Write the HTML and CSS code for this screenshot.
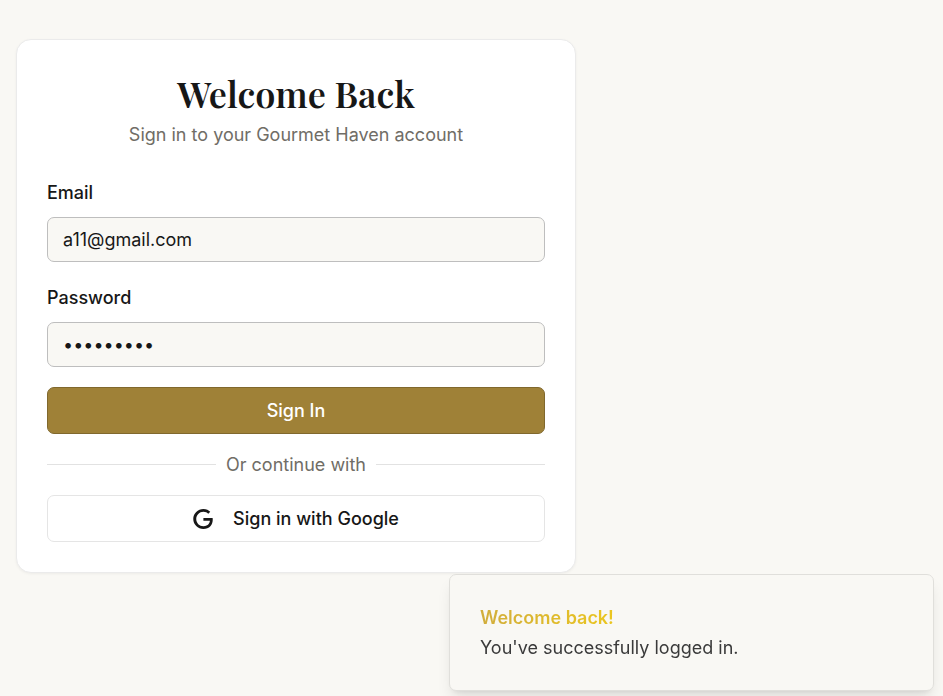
FILE: index.html
```html
<!DOCTYPE html>
<html lang="en">
<head>
<meta charset="utf-8">
<meta name="viewport" content="width=device-width, initial-scale=1">
<title>Sign in - Gourmet Haven</title>
<link rel="stylesheet" href="styles.css">
</head>
<body>
<main class="page">
  <section class="card">
    <header class="card-header">
      <h1 class="title">Welcome Back</h1>
      <p class="subtitle">Sign in to your Gourmet Haven account</p>
    </header>
    <form class="form">
      <div class="field">
        <label class="label" for="email">Email</label>
        <input class="input" id="email" type="email" value="a11@gmail.com">
      </div>
      <div class="field">
        <label class="label" for="password">Password</label>
        <input class="input" id="password" type="password" value="gourmet11">
      </div>
      <button class="button button-primary" type="submit">Sign In</button>
    </form>
    <div class="divider">Or continue with</div>
    <button class="button button-outline" type="button">
      <svg class="google" viewBox="0 0 24 24" aria-hidden="true"><path d="M12.48 10.92v3.28h7.84c-.24 1.84-.853 3.187-1.787 4.133-1.147 1.147-2.933 2.4-6.053 2.4-4.827 0-8.6-3.893-8.6-8.72s3.773-8.72 8.6-8.72c2.6 0 4.507 1.027 5.907 2.347l2.307-2.307C18.747 1.44 16.133 0 12.48 0 5.867 0 .307 5.387.307 12s5.56 12 12.173 12c3.573 0 6.267-1.173 8.373-3.36 2.16-2.16 2.84-5.213 2.84-7.667 0-.76-.053-1.467-.173-2.053H12.48z"/></svg>
      <span>Sign in with Google</span>
    </button>
  </section>
</main>
<div class="toast" role="status">
  <strong class="toast-title">Welcome back!</strong>
  <p class="toast-text">You've successfully logged in.</p>
</div>
</body>
</html>
```
FILE: styles.css
```css
* {
  box-sizing: border-box;
}

body {
  margin: 0;
  min-height: 100vh;
  overflow: hidden;
  background: #f9f8f4;
  color: #171717;
  font-family: Inter, "Liberation Sans", sans-serif;
  font-size: 18px;
  line-height: 25px;
}

h1,
p {
  margin: 0;
}

.page {
  padding: 39px 16px;
}

.card {
  max-width: 560px;
  padding: 30px;
  border: 1px solid #ebebeb;
  border-radius: 15px;
  background: #fff;
  box-shadow: 0 1px 3px rgb(0 0 0 / 5%);
}

.card-header {
  margin-bottom: 30px;
  text-align: center;
}

.title {
  margin-bottom: 6px;
  font-family: "Playfair Display", "Liberation Serif", serif;
  font-size: 36px;
  font-weight: 600;
  line-height: 46px;
}

.subtitle {
  color: #706d66;
}

.form {
  display: flex;
  flex-direction: column;
  gap: 20px;
}

.field {
  display: flex;
  flex-direction: column;
  gap: 8px;
}

.label {
  font-weight: 500;
  line-height: 32px;
}

.input {
  width: 100%;
  height: 45px;
  padding: 0 15px;
  border: 1px solid #bebebe;
  border-radius: 7px;
  outline: 0;
  background: #f9f8f4;
  color: inherit;
  font: inherit;
}

.button {
  display: flex;
  align-items: center;
  justify-content: center;
  gap: 20px;
  width: 100%;
  height: 47px;
  border: 1px solid #e5e5e5;
  border-radius: 7px;
  background: #fff;
  color: inherit;
  font: inherit;
  font-weight: 500;
}

.button-primary {
  border-color: #80682d;
  background: #9f8137;
  color: #fff;
}

.divider {
  display: flex;
  align-items: center;
  gap: 10px;
  margin: 18px 0;
  color: #706d66;
}

.divider::before,
.divider::after {
  content: "";
  flex: 1;
  height: 1px;
  background: #e2e2e2;
}

.google {
  width: 20px;
  height: 20px;
  fill: currentColor;
}

.toast {
  position: fixed;
  right: 9px;
  bottom: 5px;
  width: 485px;
  max-width: calc(100% - 18px);
  padding: 30px;
  border: 1px solid #e0dfdb;
  border-radius: 7px;
  background: #f9f8f4;
  box-shadow: 0 10px 15px -3px rgb(0 0 0 / 10%), 0 4px 6px -4px rgb(0 0 0 / 10%);
}

.toast-title {
  display: block;
  width: fit-content;
  margin-bottom: 5px;
  background: linear-gradient(90deg, #d1ad3c, #ebc61f);
  background-clip: text;
  color: transparent;
  font-weight: 600;
}

.toast-text {
  color: #3a3a3a;
}
```
